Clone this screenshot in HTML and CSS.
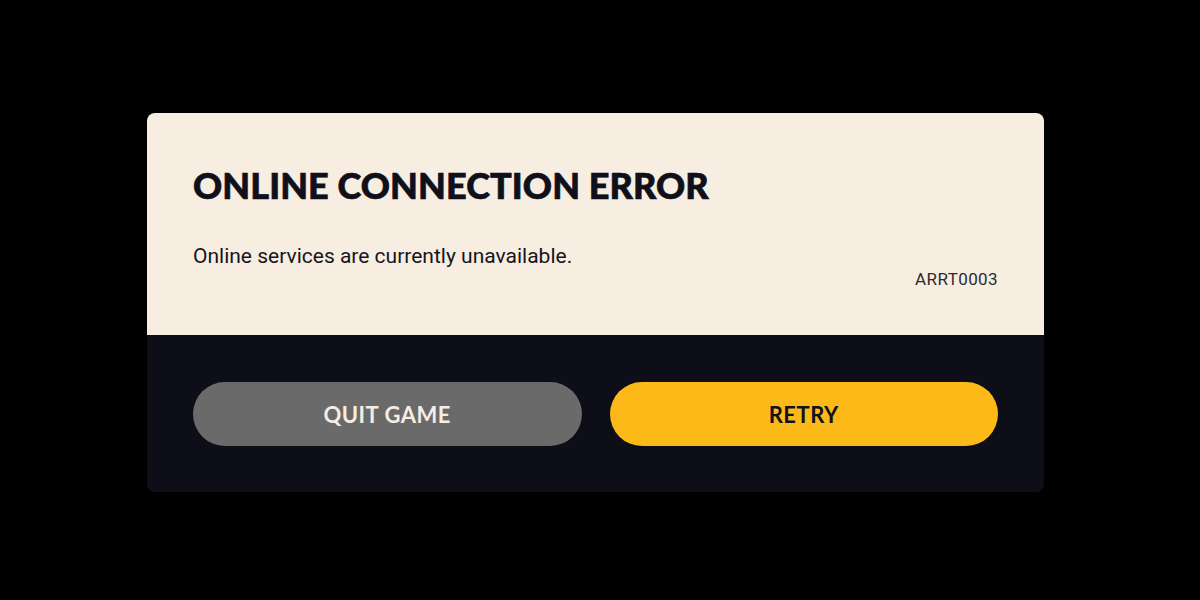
FILE: index.html
```html
<!DOCTYPE html>
<html lang="en">
<head>
  <meta charset="UTF-8">
  <meta name="viewport" content="width=device-width, initial-scale=1.0">
  <title>Online Connection Error</title>
  <link rel="stylesheet" href="styles.css">
</head>
<body>
  <div class="dialog">
    <div class="dialog-body">
      <h1>ONLINE CONNECTION ERROR</h1>
      <p class="message">Online services are currently unavailable.</p>
      <p class="code">ARRT0003</p>
    </div>
    <div class="dialog-actions">
      <button class="btn btn-quit">QUIT GAME</button>
      <button class="btn btn-retry">RETRY</button>
    </div>
  </div>
</body>
</html>
```

FILE: styles.css
```css
body {
  margin: 0;
  padding: 0;
  width: 1200px;
  height: 600px;
  background-color: #000000;
  font-family: "Roboto", sans-serif;
}

.dialog {
  position: relative;
  top: 113px;
  width: 897px;
  margin: 0 auto 0 147px;
  border-radius: 8px;
  overflow: hidden;
}

.dialog-body {
  height: 222px;
  box-sizing: border-box;
  padding: 52px 46px 0 46px;
  background-color: #f8ede1;
}

.dialog-body h1 {
  margin: 0;
  font-family: "Lato", sans-serif;
  font-weight: 900;
  font-size: 36px;
  line-height: 40px;
  letter-spacing: 0.1px;
  color: #0f101a;
  -webkit-text-stroke: 0.7px #0f101a;
}

.message {
  margin: 39px 0 0 0;
  font-size: 21px;
  line-height: 24px;
  color: #15151d;
}

.code {
  margin: 1px 0 0 0;
  text-align: right;
  font-size: 17px;
  line-height: 20px;
  letter-spacing: 0.4px;
  color: #2b2b30;
}

.dialog-actions {
  display: flex;
  gap: 28px;
  height: 157px;
  box-sizing: border-box;
  padding: 47px 46px 0 46px;
  background-color: #0d0e18;
}

.btn {
  flex: 1;
  height: 64px;
  border: none;
  border-radius: 32px;
  font-family: "Lato", sans-serif;
  font-weight: 700;
  font-size: 22px;
  letter-spacing: 0.5px;
  cursor: pointer;
}

.btn-quit {
  background-color: #6b6a6a;
  color: #f6ede2;
}

.btn-retry {
  background-color: #fdb918;
  color: #12121a;
}
```
